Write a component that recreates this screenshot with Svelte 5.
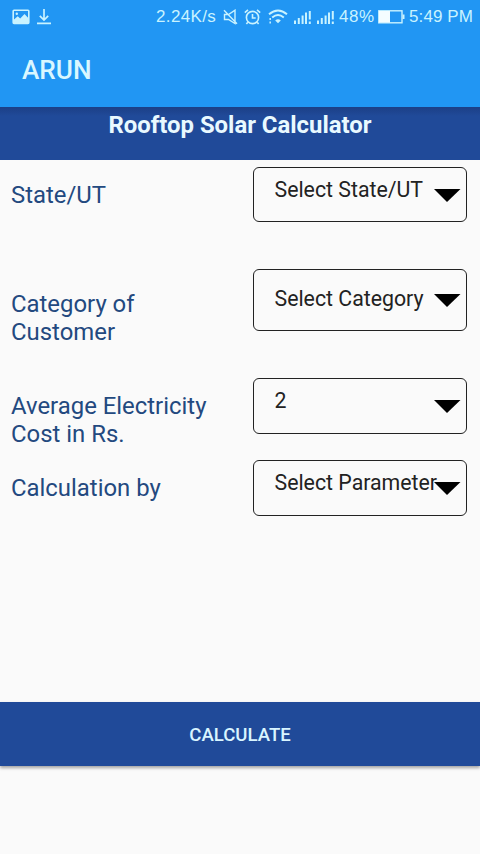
<script>
  const fields = [
    { label: 'State/UT', value: 'Select State/UT', row: 102, box: 55, pad: 0 },
    { label: 'Category of Customer', value: 'Select Category', row: 109, box: 62, pad: 7 },
    { label: 'Average Electricity Cost in Rs.', value: '2', row: 82, box: 56, pad: 0 },
    { label: 'Calculation by', value: 'Select Parameter', row: 56, box: 56, pad: 0 }
  ];
</script>

{#snippet signal()}
  <svg class="signal" width="17" height="14" viewBox="0 0 17 14" fill="currentColor">
    <path d="M0 10.5h2V14H0zM3.8 8h2v6h-2zM7.6 5.5h2V14h-2zM11 2.5h2V14h-2zM14.8 1h2v8.5h-2zM14.8 11.5h2V14h-2z" />
  </svg>
{/snippet}

<div class="screen">
  <header class="top">
    <div class="status">
      <svg class="photo" width="18" height="16" viewBox="0 0 18 16">
        <rect x="1.2" y="1.2" width="15.6" height="13.2" rx=".8" fill="none" stroke="currentColor" stroke-width="1.6" />
        <path d="M2 14V10.5l3.7-3.2 2.5 2.2 4.3-4.5 4 4.2V14z" fill="currentColor" />
        <circle cx="4.8" cy="4.7" r="1.2" fill="currentColor" />
      </svg>
      <svg class="download" width="14" height="16" viewBox="0 0 14 16" fill="none" stroke="currentColor" stroke-width="1.7">
        <path d="M7 0v11M2.8 6.8 7 11 11.2 6.8M0 14.4h14" />
      </svg>
      <span class="speed">2.24K/s</span>
      <svg class="mute" width="15" height="16" viewBox="0 0 15 16" fill="none" stroke="currentColor" stroke-width="1.4">
        <path d="M1.5 5.5h4L12 1.2v13.3L5.5 10.5h-4zM1 1.2l13 13.6" />
      </svg>
      <svg class="alarm" width="17" height="16" viewBox="0 0 17 16" fill="none" stroke="currentColor" stroke-width="1.6">
        <circle cx="8.5" cy="8.5" r="6.1" />
        <path d="M8.5 5v4h3.2M.8 3.6 4 .8M16.2 3.6 13 .8M3.8 13.3 2.4 15M13.2 13.3l1.4 1.7" />
      </svg>
      <svg class="wifi" width="20" height="15" viewBox="0 0 20 15" fill="none" stroke="currentColor" stroke-width="1.9">
        <path d="M1 5.2Q10-2.4 19 5.2M4.2 8.5q5.8-4.8 11.6 0" />
        <path d="M7.2 11.6Q10 9 12.8 11.6L10 14.2z" fill="currentColor" stroke="none" />
        <path d="M2.2 9v2M2.2 12.5v2" stroke-width="1.5" />
      </svg>
      {@render signal()}
      {@render signal()}
      <span class="percent">48%</span>
      <svg class="battery" width="27" height="14" viewBox="0 0 27 14">
        <rect x=".8" y=".8" width="23.2" height="12" fill="none" stroke="currentColor" stroke-width="1.4" />
        <path d="M1 1h11v11.5H1z" fill="#f4fdff" />
        <path d="M24.5 4.5h2v4.5h-2z" fill="currentColor" />
      </svg>
      <span class="clock">5:49 PM</span>
    </div>
    <h1>ARUN</h1>
  </header>

  <h2>Rooftop Solar Calculator</h2>

  <main>
    {#each fields as field}
      <div class="row" style="height: {field.row}px">
        <div class="label" style="padding-top: {14 + field.pad}px">{field.label}</div>
        <button class="select" style="height: {field.box}px; padding-top: {field.pad + 9}px">
          <span>{field.value}</span>
          <svg class="arrow" width="28" height="26" viewBox="0 0 28 26">
            <path d="M1 7h26.5L14 20z" fill="#000" />
          </svg>
        </button>
      </div>
    {/each}
  </main>

  <button class="calculate">CALCULATE</button>
</div>

<style>
  :global(body) { margin: 0; background: #fafafa; }
  .screen {
    display: flex;
    flex-direction: column;
    width: 480px;
    height: 854px;
    overflow: hidden;
    background: #fafafa;
    font-family: Roboto, sans-serif;
  }
  .top { height: 107px; background: #2196f3; flex: none; }
  .status {
    display: flex;
    align-items: center;
    height: 33px;
    padding-left: 12px;
    color: #c9f3ff;
    font: 17px/33px "Liberation Sans", Arial, sans-serif;
    white-space: nowrap;
  }
  .status svg { flex: none; }
  .status span { flex: none; }
  .download { margin-left: 7px; }
  .speed { width: 67px; margin-left: 105px; letter-spacing: .35px; }
  .alarm { margin-left: 6px; }
  .wifi { margin-left: 7px; }
  .signal { margin-left: 6px; }
  .percent { width: 37px; margin-left: 5px; letter-spacing: .5px; }
  .battery { margin-left: 2px; }
  .clock { margin-left: 4px; letter-spacing: .1px; }
  h1 {
    margin: 0;
    padding: 21px 0 0 22px;
    color: #d9f7ff;
    font-size: 26.2px;
    line-height: 32px;
    font-weight: 500;
  }
  h2 {
    flex: none;
    box-sizing: border-box;
    height: 53px;
    margin: 0;
    padding-top: 4px;
    background: linear-gradient(#1c3f86, #204a99 9px);
    color: #e9f9ff;
    text-align: center;
    font-size: 23.9px;
    line-height: 29px;
    font-weight: 700;
  }
  main { height: 535px; padding-top: 7px; flex: none; }
  .row {
    display: flex;
    align-items: flex-start;
    justify-content: space-between;
    padding: 0 13px 0 11px;
  }
  .label { width: 210px; color: #23497f; font-size: 23.9px; line-height: 28px; }
  button { font-family: inherit; }
  .select {
    position: relative;
    display: flex;
    align-items: flex-start;
    box-sizing: border-box;
    width: 214px;
    padding: 0 0 0 20.5px;
    border: 1.4px solid #222;
    border-radius: 6px;
    background: #fafafa;
    color: #222;
    font-size: 21.3px;
    line-height: 26px;
    white-space: nowrap;
  }
  .arrow { position: absolute; right: 5px; top: calc(50% - 13px); }
  .calculate {
    flex: none;
    height: 64px;
    margin: 0;
    padding: 2px 0 0;
    border: 0;
    background: #204a99;
    box-shadow: 0 2px 3px rgba(0, 0, 0, .35);
    color: #d9f5ff;
    font-size: 18.6px;
    font-weight: 500;
  }
</style>
